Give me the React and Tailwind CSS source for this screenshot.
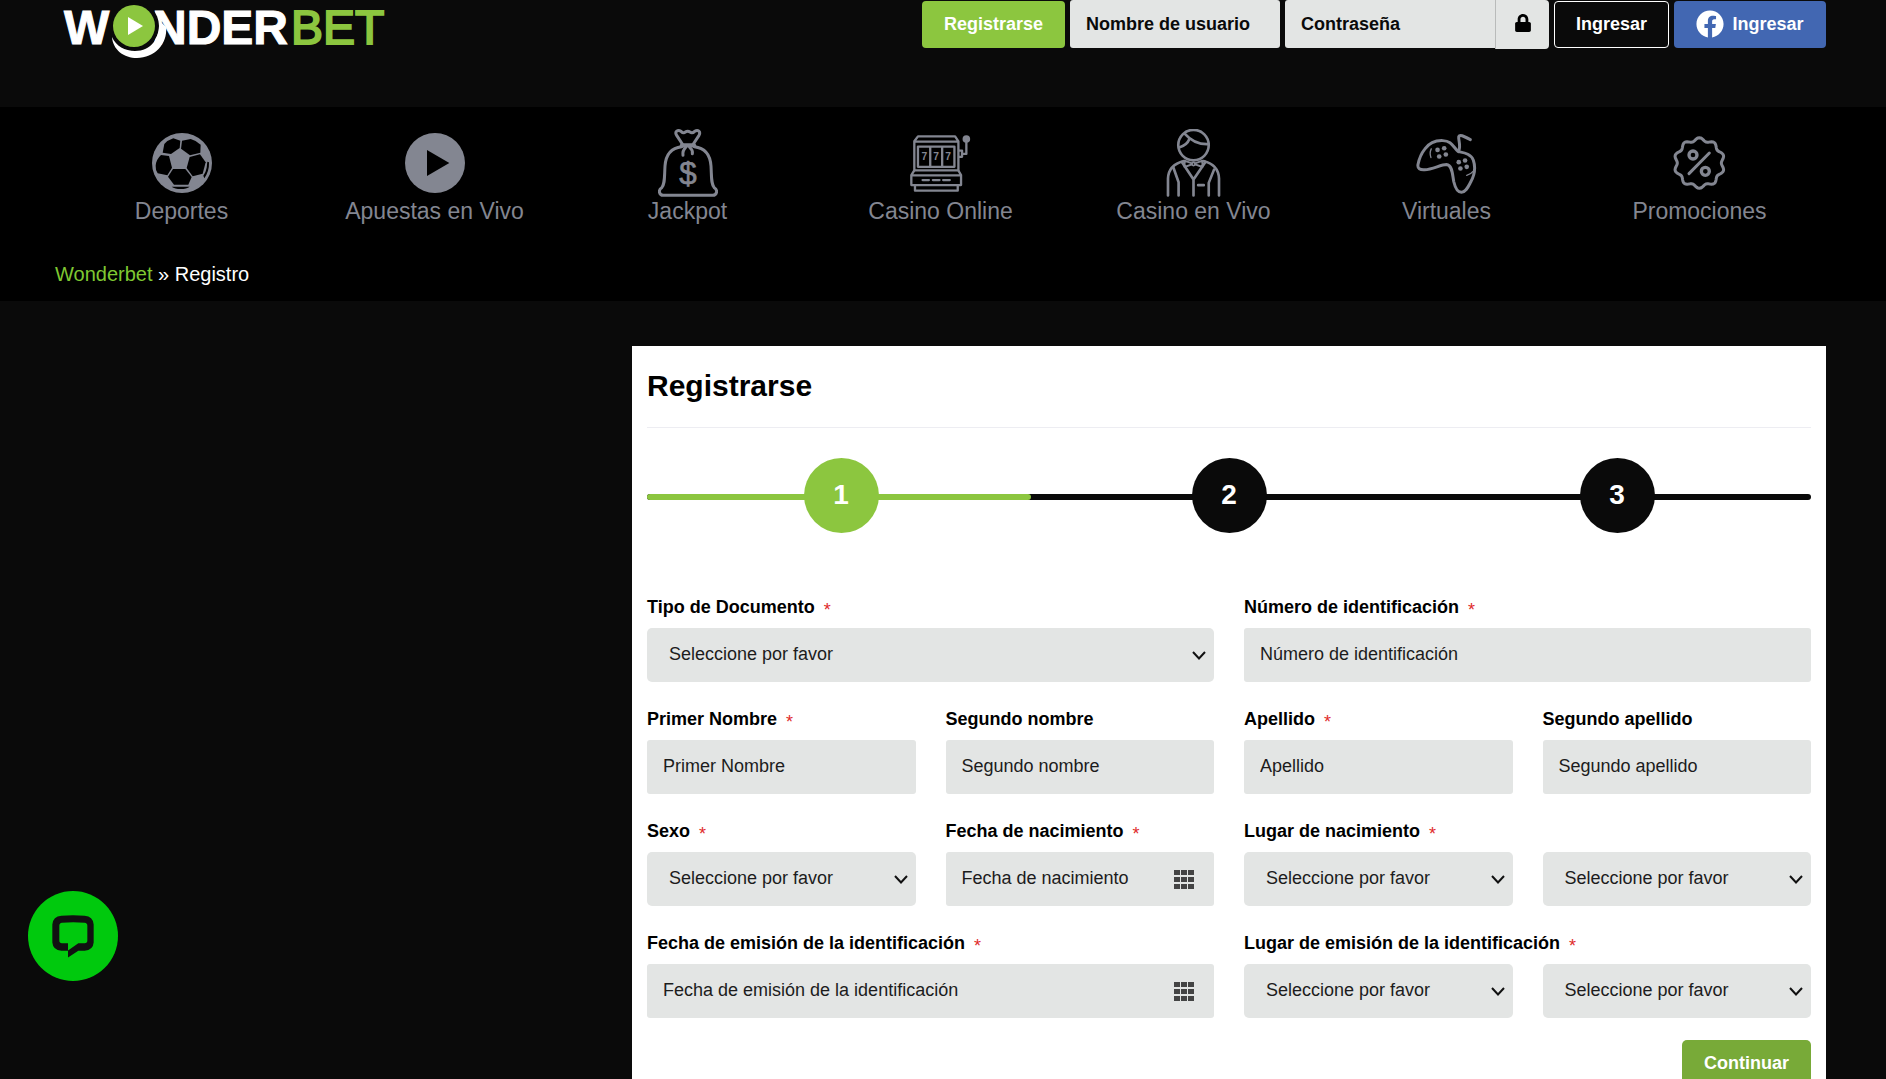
import React from "react";
import { FaLock, FaFacebook } from "react-icons/fa";

const waveBadge = Array.from({ length: 120 }, (_, i) => {
  const a = (i / 120) * Math.PI * 2;
  const r = 71 + 5 * Math.cos(a * 10);
  return `${(298 + r * Math.sin(a)).toFixed(1)},${(142 - r * Math.cos(a)).toFixed(1)}`;
}).join(" ");

function SoccerIcon() {
  return (
    <svg viewBox="0 0 180 180" className="w-[60px] h-[60px]">
      <circle cx="90" cy="90" r="90" fill="currentColor" />
      <g fill="#000">
        <path d="M32 59 37 33Q48 21 64 16L85 23 83 45 57 63Z" />
        <path d="M90 23 116 18Q134 23 146 35L145 59 114 67 87 47Z" />
        <path d="M11 98Q12 80 27 66L51 69 60 104 46 127 17 121Q10 110 11 98Z" />
        <path d="M113 72 144 64 161 88 152 122 122 130 104 105Z" />
        <path d="M63 108H100L119 132 109 155H66L48 131Z" />
        <path d="M166 86 171 88Q172 114 157 136L154 128Q162 116 164 104Z" />
        <path d="M59 161H113Q104 168 86 168 68 168 59 161Z" />
      </g>
    </svg>
  );
}

function PlayIcon() {
  return (
    <svg viewBox="0 0 180 180" className="w-[60px] h-[60px]">
      <circle cx="90" cy="90" r="90" fill="currentColor" />
      <path d="M66 51 133 90 66 129Z" fill="#000" />
    </svg>
  );
}

function JackpotIcon() {
  return (
    <svg
      viewBox="84 41 180 204"
      className="w-[60px] h-[68px]"
      fill="none"
      stroke="currentColor"
      strokeWidth="9"
      strokeLinecap="round"
      strokeLinejoin="round"
    >
      <path d="M155 94C120 98 107 122 105 152C103 186 105 206 95 217C84 224 87 240 100 240H248C261 240 264 224 253 217C243 206 245 186 243 152C241 122 228 98 193 94" />
      <path d="M157 86 140 60C133 49 143 42 153 48C158 53 162 54 166 50Q173 45 180 50C185 54 189 53 194 48C204 42 213 49 207 60L190 86" />
      <path d="M156 90H192" strokeWidth="13" />
      <path d="M167 96Q157 106 159 120M179 96Q189 104 187 115" />
      <text
        x="174"
        y="206"
        textAnchor="middle"
        fontSize="94"
        fontFamily="Liberation Sans, sans-serif"
        fill="currentColor"
        strokeWidth="2"
      >
        $
      </text>
    </svg>
  );
}

function SlotIcon() {
  return (
    <svg
      viewBox="842 54 184 178"
      className="w-[61px] h-[59px]"
      fill="none"
      stroke="currentColor"
      strokeWidth="7"
      strokeLinejoin="round"
    >
      <path d="M855 164V76L866 61H978L988 76V164ZM855 77H988" />
      <path d="M866 92H976V153H866ZM903 92V153M939 92V153" />
      <path d="M855 164 846 178V208H996V178L988 164M846 179H996M857 208V225H986V208" />
      <path d="M880 193H899M911 193H931M942 193H962" strokeLinecap="round" />
      <path d="M988 104H999V123H988M999 114H1012V76" />
      <circle cx="1012" cy="69" r="8" fill="currentColor" />
      <g
        fill="currentColor"
        stroke="none"
        fontSize="31"
        fontWeight="700"
        fontFamily="Liberation Sans, sans-serif"
        textAnchor="middle"
      >
        <text x="885" y="133">7</text>
        <text x="921" y="133">7</text>
        <text x="957" y="133">7</text>
      </g>
    </svg>
  );
}

function DealerIcon() {
  return (
    <svg
      viewBox="196 41 166 204"
      className="w-[55px] h-[68px]"
      fill="none"
      stroke="currentColor"
      strokeWidth="8"
      strokeLinecap="round"
      strokeLinejoin="round"
    >
      <circle cx="279" cy="89" r="46" />
      <path d="M253 55C268 72 294 88 325 86M267 70C262 83 251 92 236 96" />
      <path d="M202 241V190C203 160 222 144 250 137M356 241V190C355 160 337 144 309 137" />
      <path d="M218 156 234 201V241M341 163 325 203V241M325 203V214" />
      <path d="M244 140 279 193 315 140M279 193V241M293 210H310" />
      <path d="M252 136 274 144V147L252 155ZM306 136 284 144V147L306 155Z" strokeWidth="6" />
      <circle cx="279" cy="146" r="5" strokeWidth="5" />
    </svg>
  );
}

function GamepadIcon() {
  return (
    <svg
      viewBox="946 51 184 184"
      className="w-[61px] h-[61px]"
      fill="none"
      stroke="currentColor"
      strokeWidth="9"
      strokeLinecap="round"
      strokeLinejoin="round"
    >
      <path d="M1073 107C1057 91 1053 75 1027 74C1004 73 984 84 973 99C961 114 955 131 952 146C950 158 958 163 972 162C996 161 1021 146 1038 146C1056 147 1056 178 1060 198C1064 215 1072 230 1083 230C1096 230 1103 214 1111 199C1122 179 1126 154 1119 133C1111 113 1092 111 1073 107Z" />
      <path d="M1075 105C1082 89 1073 71 1075 62C1078 54 1089 60 1110 71" />
      <path d="M992 99Q986 111 991 125M1099 179Q1111 176 1118 167" strokeWidth="4" />
      <g fill="currentColor" stroke="none">
        <circle cx="1011" cy="102" r="7" />
        <circle cx="1031" cy="97" r="7" />
        <circle cx="1016" cy="122" r="7" />
        <circle cx="1036" cy="116" r="7" />
        <circle cx="1075" cy="139" r="7" />
        <circle cx="1094" cy="134" r="7" />
        <circle cx="1080" cy="158" r="7" />
        <circle cx="1099" cy="153" r="7" />
      </g>
    </svg>
  );
}

function PromoIcon() {
  return (
    <svg
      viewBox="219 61 162 162"
      className="w-[54px] h-[54px]"
      fill="none"
      stroke="currentColor"
      strokeWidth="9"
      strokeLinecap="round"
    >
      <polygon points={waveBadge} strokeLinejoin="round" />
      <path d="M328 112 267 174" />
      <circle cx="279" cy="118" r="12" strokeWidth="10" />
      <circle cx="316" cy="167" r="12" strokeWidth="10" />
    </svg>
  );
}

const navItems = [
  { label: "Deportes", Icon: SoccerIcon },
  { label: "Apuestas en Vivo", Icon: PlayIcon },
  { label: "Jackpot", Icon: JackpotIcon },
  { label: "Casino Online", Icon: SlotIcon },
  { label: "Casino en Vivo", Icon: DealerIcon },
  { label: "Virtuales", Icon: GamepadIcon },
  { label: "Promociones", Icon: PromoIcon },
];

function Logo() {
  return (
    <svg
      viewBox="55 0 340 64"
      className="w-[340px] h-16 font-['Liberation_Sans',Arial,sans-serif]"
      role="img"
      aria-label="Wonderbet"
    >
      <g fill="#fff" stroke="#fff" strokeWidth="1" fontSize="48" fontWeight="700">
        <text x="64" y="44">W</text>
        <text x="152" y="44">NDER</text>
      </g>
      <text x="291" y="44" fontSize="48" fill="#8cc63f" stroke="#8cc63f" strokeWidth="2">
        BET
      </text>
      <circle cx="134" cy="26" r="25" fill="#0a0a0a" />
      <path d="M112 37C116 46 125 51 135 51C151 51 161 38 159 20L166 27C168 44 154 58 137 58C124 58 113 50 112 37Z" fill="#fff" />
      <circle cx="134" cy="26" r="21" fill="#8cc63f" />
      <path d="M128 17V35L143 26Z" fill="#fff" />
    </svg>
  );
}

function Field({ id, label, required, wide, children }) {
  return (
    <div className={`flex flex-col justify-end gap-[9px] ${wide ? "col-span-2" : ""}`}>
      {label && (
        <label htmlFor={id} className="text-lg leading-6 font-bold whitespace-nowrap">
          {label}
          {required && <span className="relative top-[3px] ml-[9px] font-normal text-[#e02b2b]">*</span>}
        </label>
      )}
      {children}
    </div>
  );
}

function TextInput({ id, placeholder }) {
  return (
    <input
      id={id}
      type="text"
      placeholder={placeholder}
      className="w-full h-[54px] px-4 pb-0.5 rounded-[3px] bg-[#e3e5e4] text-lg placeholder:text-[#1c1c1c]"
    />
  );
}

function DateInput({ id, placeholder }) {
  return (
    <div className="relative">
      <TextInput id={id} placeholder={placeholder} />
      <button type="button" aria-label="Abrir calendario" className="absolute right-5 top-[18px]">
        <svg viewBox="0 0 20 19" className="w-5 h-[19px]" fill="#444">
          {[0, 7, 14].map((y) =>
            [0, 7, 14].map((x) => <rect key={`${x}-${y}`} x={x} y={y} width="6" height="5" />)
          )}
        </svg>
      </button>
    </div>
  );
}

function Select({ id, label }) {
  return (
    <div className="relative">
      <select
        id={id}
        aria-label={label}
        className="w-full h-[54px] pl-[22px] pr-8 pb-0.5 rounded-[5px] appearance-none bg-[#e3e5e4] text-lg text-[#1c1c1c]"
      >
        <option>Seleccione por favor</option>
      </select>
      <svg
        viewBox="0 0 14 9"
        className="absolute right-2 top-[23px] w-3.5 h-[9px] pointer-events-none"
        fill="none"
        stroke="#111"
        strokeWidth="2"
      >
        <path d="M1 1 7 7.5 13 1" />
      </svg>
    </div>
  );
}

function Steps() {
  return (
    <div className="relative mt-[30px]">
      <div className="absolute inset-x-0 top-9 h-1.5 rounded-full bg-[#0a0a0a]">
        <div className="w-[33%] h-full rounded-full bg-[#8cc63f]" />
      </div>
      <ol className="relative grid grid-cols-3 justify-items-center">
        {[1, 2, 3].map((n) => (
          <li
            key={n}
            className={`flex items-center justify-center size-[75px] pb-0.5 rounded-full text-[28px] font-bold text-white ${
              n === 1 ? "bg-[#8cc63f]" : "bg-[#0a0a0a]"
            }`}
          >
            {n}
          </li>
        ))}
      </ol>
    </div>
  );
}

export default function App() {
  return (
    <div className="min-h-screen bg-[#0a0a0a] font-['Liberation_Sans',Arial,sans-serif] text-black">
      <header className="flex justify-between h-[107px] pl-[55px] pr-[60px]">
        <a href="#" className="h-16">
          <Logo />
        </a>
        <form className="flex items-start gap-[5px] text-lg font-bold">
          <button type="button" className="w-[143px] h-[47px] mt-px pb-0.5 rounded-[4px] bg-[#8cc63f] text-white">
            Registrarse
          </button>
          <input
            type="text"
            aria-label="Nombre de usuario"
            placeholder="Nombre de usuario"
            className="w-[210px] h-12 px-4 rounded-[3px] bg-[#e3e5e4] placeholder:text-[#0a0a0a]"
          />
          <div className="flex items-start">
            <input
              type="password"
              aria-label="Contraseña"
              placeholder="Contraseña"
              className="w-[210px] h-12 px-4 rounded-l-[3px] bg-[#e3e5e4] placeholder:text-[#0a0a0a]"
            />
            <button
              type="button"
              aria-label="Recuperar contraseña"
              className="flex items-center justify-center w-[54px] h-[49px] pb-1 border-l border-[#b9bbba] rounded-r-[4px] bg-[#e3e5e4]"
            >
              <FaLock size={18} />
            </button>
          </div>
          <button type="submit" className="w-[115px] h-[47px] mt-px pb-0.5 rounded-[4px] border border-white text-white">
            Ingresar
          </button>
          <button
            type="button"
            className="flex items-center justify-center gap-2 w-[152px] h-[47px] mt-px pb-0.5 rounded-[4px] bg-[#4267b2] text-white"
          >
            <FaFacebook size={28} />
            Ingresar
          </button>
        </form>
      </header>

      <div className="bg-black pt-[22px] pb-[13px] pl-[55px] pr-[60px]">
        <nav className="grid grid-cols-7 text-[#838691]">
          {navItems.map(({ label, Icon }) => (
            <a key={label} href="#" className="flex flex-col items-center">
              <span className="flex items-center h-[68px]">
                <Icon />
              </span>
              <span className="text-[23px] leading-7">{label}</span>
            </a>
          ))}
        </nav>
        <div className="mt-[35px] text-xl leading-7 text-white">
          <a href="#" className="text-[#7fc832]">
            Wonderbet
          </a>{" "}
          » Registro
        </div>
      </div>

      <main className="grid grid-cols-[577fr_1194fr] pt-[45px] pl-[55px] pr-[60px]">
        <section className="col-start-2 bg-white px-[15px] pt-[22px] pb-[15px]">
          <h1 className="pb-[23px] border-b border-[#ededf2] text-3xl font-bold">Registrarse</h1>

          <Steps />

          <form className="mt-[62px]">
            <div className="grid grid-cols-4 gap-x-[30px] gap-y-[25px]">
              <Field id="doc-type" label="Tipo de Documento" required wide>
                <Select id="doc-type" />
              </Field>
              <Field id="doc-number" label="Número de identificación" required wide>
                <TextInput id="doc-number" placeholder="Número de identificación" />
              </Field>

              <Field id="first-name" label="Primer Nombre" required>
                <TextInput id="first-name" placeholder="Primer Nombre" />
              </Field>
              <Field id="middle-name" label="Segundo nombre">
                <TextInput id="middle-name" placeholder="Segundo nombre" />
              </Field>
              <Field id="last-name" label="Apellido" required>
                <TextInput id="last-name" placeholder="Apellido" />
              </Field>
              <Field id="second-last-name" label="Segundo apellido">
                <TextInput id="second-last-name" placeholder="Segundo apellido" />
              </Field>

              <Field id="gender" label="Sexo" required>
                <Select id="gender" />
              </Field>
              <Field id="birth-date" label="Fecha de nacimiento" required>
                <DateInput id="birth-date" placeholder="Fecha de nacimiento" />
              </Field>
              <Field id="birth-region" label="Lugar de nacimiento" required>
                <Select id="birth-region" />
              </Field>
              <Field>
                <Select id="birth-city" label="Ciudad de nacimiento" />
              </Field>

              <Field id="issue-date" label="Fecha de emisión de la identificación" required wide>
                <DateInput id="issue-date" placeholder="Fecha de emisión de la identificación" />
              </Field>
              <Field id="issue-region" label="Lugar de emisión de la identificación" required>
                <Select id="issue-region" />
              </Field>
              <Field>
                <Select id="issue-city" label="Ciudad de emisión" />
              </Field>
            </div>

            <div className="flex justify-end mt-[22px]">
              <button type="submit" className="w-[129px] h-[47px] pb-0.5 rounded-[5px] bg-[#78aa38] text-lg font-bold text-white">
                Continuar
              </button>
            </div>
          </form>
        </section>
      </main>

      {/* Live chat */}
      <button
        type="button"
        aria-label="Chat en vivo"
        className="fixed left-7 bottom-[98px] flex items-center justify-center size-[90px] rounded-full bg-[#00c90d]"
      >
        <svg viewBox="126 138 126 128" className="w-[42px] h-[43px]" fill="#111" fillRule="evenodd">
          <path d="M154 140Q189 137 224 140Q249 142 251 166V220Q249 243 224 245H205L174 265V245H154Q129 243 127 220V166Q129 142 154 140ZM156 161Q148 162 148 170V214Q148 222 156 222H174V244L205 222H224Q232 222 232 214V170Q232 162 224 161Q189 158 156 161Z" />
        </svg>
      </button>
    </div>
  );
}
